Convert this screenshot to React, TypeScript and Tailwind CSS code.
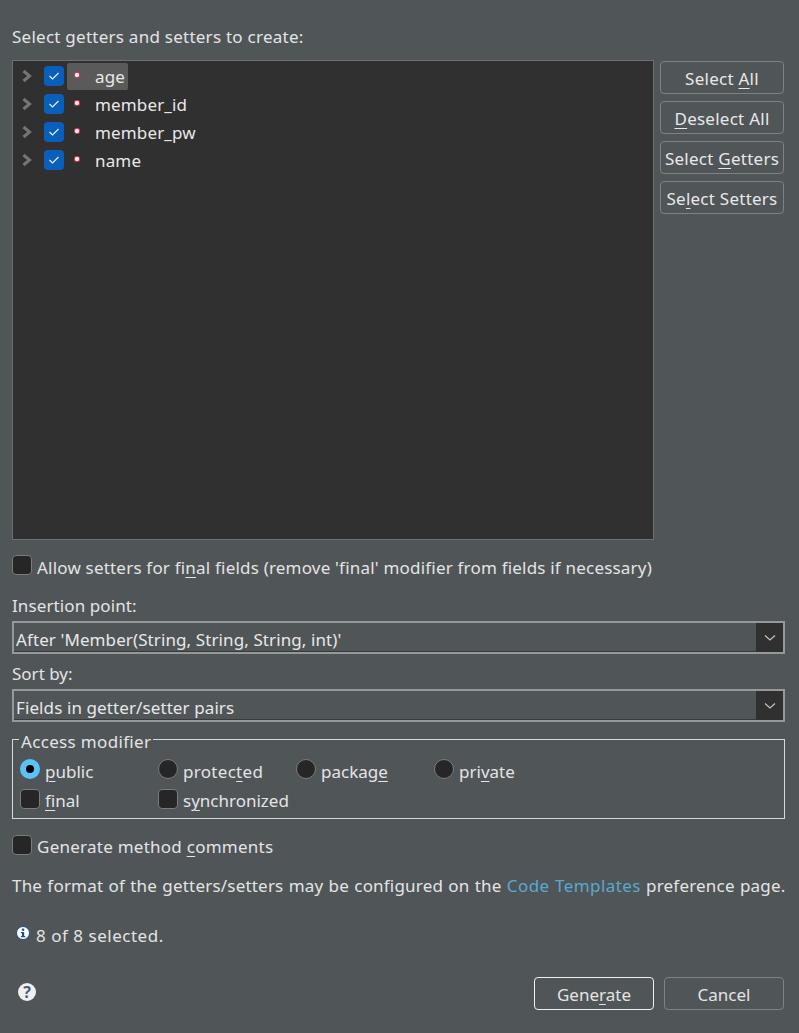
import React from "react";

const font = { fontFamily: '"Noto Sans", "Open Sans", sans-serif' };

function Chevron() {
  return (
    <svg width="12" height="14" viewBox="0 0 12 14" className="shrink-0">
      <path d="M2.5 2 L8.5 7 L2.5 12" fill="none" stroke="#757575" strokeWidth="3" />
    </svg>
  );
}

function CheckedBox() {
  return (
    <span className="flex h-5 w-5 shrink-0 items-center justify-center rounded-[4px] bg-[#0a5fbd]">
      <svg width="12" height="10" viewBox="0 0 12 10">
        <path d="M1.5 5 L4.5 8 L10.5 2" fill="none" stroke="#e8f0fa" strokeWidth="1.2" />
      </svg>
    </span>
  );
}

function Row({ name, selected }: { name: string; selected?: boolean }) {
  return (
    <div className="flex h-7 items-center">
      <span className="ml-2 flex w-[23px] shrink-0 items-center"><Chevron /></span>
      <CheckedBox />
      <div className={"ml-[3px] flex h-[27px] items-center rounded-[2px] pl-[8px] pr-[3px] " + (selected ? "bg-[#5a5a5a]" : "")}>
        <span className="mr-[16px] block h-[4px] w-[4px] -translate-y-[1px] rounded-[1px] bg-[#f8eef0] outline outline-1 outline-[#e0304a]" />
        <span className="translate-y-[1px] tracking-[0.15px] text-[#e8e8e8]">{name}</span>
      </div>
    </div>
  );
}

function SideButton({ children }: { children: React.ReactNode }) {
  return (
    <button className="flex h-[33px] w-[124px] items-center justify-center rounded-[4px] border border-[#7e8284] pt-[3px] tracking-[0.25px] text-[#e8e8e8]">
      <span>{children}</span>
    </button>
  );
}

function Box() {
  return <span className="block h-5 w-5 shrink-0 rounded-[4px] border border-[#7c7c7c] bg-[#262626]" />;
}

function Radio() {
  return <span className="block h-5 w-5 shrink-0 rounded-full border border-[#7c7c7c] bg-[#262626]" />;
}

function Combo({ text }: { text: string }) {
  return (
    <div className="flex h-[33px] items-stretch border-2 border-[#96999a]">
      <div className="flex flex-1 items-center border-b border-[#3a3a3a] pl-[2px] pt-[5px] tracking-[0.1px] text-[#e8e8e8]">{text}</div>
      <div className="flex w-[27px] items-center justify-center bg-[#303030]">
        <svg width="12" height="8" viewBox="0 0 12 8">
          <path d="M1 1.5 L6 6 L11 1.5" fill="none" stroke="#c4c4c4" strokeWidth="1.2" />
        </svg>
      </div>
    </div>
  );
}

function U({ children }: { children: React.ReactNode }) {
  return <span className="underline decoration-1 underline-offset-[3px]">{children}</span>;
}

export default function App() {
  return (
    <div style={font} className="flex h-[1033px] w-[799px] flex-col overflow-hidden bg-[#505558] pl-3 pr-[14px] text-[17px] leading-6 text-[#e4e4e4]">
      <div className="mt-[25px] h-6 tracking-[0.25px]">Select getters and setters to create:</div>

      <div className="mt-[11px] flex items-start gap-[6px]">
        <div className="h-[480px] w-[642px] border border-[#6c7072] bg-[#303030] pt-[1px]">
          <Row name="age" selected />
          <Row name="member_id" />
          <Row name="member_pw" />
          <Row name="name" />
        </div>
        <div className="mt-[1px] flex flex-col gap-[7px]">
          <SideButton>Select <U>A</U>ll</SideButton>
          <SideButton><U>D</U>eselect All</SideButton>
          <SideButton>Select <U>G</U>etters</SideButton>
          <SideButton>Se<U>l</U>ect Setters</SideButton>
        </div>
      </div>

      <div className="mt-[15px] flex h-5 items-center gap-[5px]">
        <Box />
        <span className="translate-y-[3px] tracking-[0.2px]">Allow setters for fi<U>n</U>al fields (remove 'final' modifier from fields if necessary)</span>
      </div>

      <div className="mt-[19px] h-6 tracking-[0.1px]">Insertion point:</div>
      <div className="mt-[3px]"><Combo text="After 'Member(String, String, String, int)'" /></div>
      <div className="mt-2 h-6">Sort by:</div>
      <div className="mt-[3px]"><Combo text="Fields in getter/setter pairs" /></div>

      <div className="relative mt-[17px] h-[80px] border border-[#d8d8d8]">
        <span className="absolute -top-[10px] left-[6px] bg-[#505558] px-[2px] tracking-[0.33px]">Access modifier</span>
        <div className="mt-[19px] ml-[7px] grid grid-cols-[138px_138px_138px_auto] gap-y-[10px]">
          <div className="flex h-5 items-center gap-[5px]">
            <span className="flex h-5 w-5 shrink-0 items-center justify-center rounded-full bg-[#5cc1f5]">
              <span className="block h-2 w-2 rounded-full bg-black" />
            </span>
            <span className="translate-y-[3px]"><U>p</U>ublic</span>
          </div>
          <div className="flex h-5 items-center gap-[5px]"><Radio /><span className="translate-y-[3px] tracking-[0.3px]">protec<U>t</U>ed</span></div>
          <div className="flex h-5 items-center gap-[5px]"><Radio /><span className="translate-y-[3px]">packag<U>e</U></span></div>
          <div className="flex h-5 items-center gap-[5px]"><Radio /><span className="translate-y-[3px]">pri<U>v</U>ate</span></div>
          <div className="flex h-5 items-center gap-[5px]"><Box /><span className="translate-y-[2px]"><U>f</U>inal</span></div>
          <div className="flex h-5 items-center gap-[5px]"><Box /><span className="translate-y-[2px]">s<U>y</U>nchronized</span></div>
        </div>
      </div>

      <div className="mt-[16px] flex h-5 items-center gap-[5px]">
        <Box />
        <span className="translate-y-[2px] tracking-[0.25px]">Generate method <U>c</U>omments</span>
      </div>

      <div className="mt-[19px] h-6 whitespace-nowrap tracking-[0.2px] [word-spacing:0.6px]">
        The format of the getters/setters may be configured on the <span className="tracking-[0.42px] text-[#59a9cf]">Code Templates</span> preference page.
      </div>

      <div className="mt-[25px] flex h-6 items-center gap-[6px] pl-1">
        <svg width="14" height="14" viewBox="0 0 14 14" className="shrink-0 -translate-y-[2px]">
          <circle cx="7" cy="7" r="6.5" fill="#fff" stroke="#1c4f8f" />
          <rect x="5.9" y="2.6" width="2.3" height="2.2" fill="#1c4f8f" />
          <path d="M4.9 5.9 H8.2 V10 H9.2 V11.2 H4.9 V10 H5.9 V7 H4.9 Z" fill="#1c4f8f" />
        </svg>
        <span className="translate-y-[1px] tracking-[0.52px]">8 of 8 selected.</span>
      </div>

      <div className="mt-[27px] flex items-start justify-between">
        <span className="ml-[6px] mt-[9px] flex h-[18px] w-[18px] items-center justify-center rounded-full bg-[#f0f0f2] text-[16px] font-bold leading-none text-[#4a5a78]">?</span>
        <div className="mr-[1px] mt-[3px] flex gap-[10px]">
          <button className="flex h-[33px] w-[120px] items-center justify-center rounded-[4px] border border-[#f0f0f0] pt-[2px]"><span>Gene<U>r</U>ate</span></button>
          <button className="flex h-[33px] w-[120px] items-center justify-center rounded-[4px] border border-[#7e8284] pt-[2px]">Cancel</button>
        </div>
      </div>
    </div>
  );
}
